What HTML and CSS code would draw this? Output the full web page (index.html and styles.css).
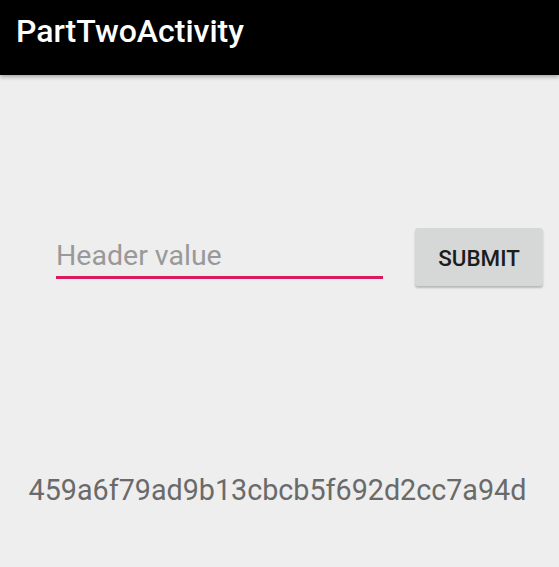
FILE: index.html
```html
<!DOCTYPE html>
<html>
<head>
<meta charset="utf-8">
<link rel="stylesheet" href="styles.css">
</head>
<body>
<header class="toolbar"><span class="title">PartTwoActivity</span></header>
<main class="content">
  <div class="form-row">
    <div class="field"><span class="hint">Header value</span></div>
    <button class="submit">SUBMIT</button>
  </div>
  <div class="result">459a6f79ad9b13cbcb5f692d2cc7a94d</div>
</main>
</body>
</html>
```
FILE: styles.css
```css
html, body {
  margin: 0;
  padding: 0;
  background: #eeeeee;
  font-family: Roboto, "Noto Sans", sans-serif;
}
.toolbar {
  position: relative;
  height: 75px;
  box-sizing: border-box;
  background: #000;
  display: flex;
  align-items: flex-start;
  padding: 13px 0 0 16px;
  box-shadow: 0 2px 4px rgba(0,0,0,0.3);
}
.title {
  color: #fff;
  font-size: 32px;
  line-height: 1.172;
  font-weight: 500;
}
.content {
  display: flex;
  flex-direction: column;
}
.form-row {
  display: flex;
  align-items: flex-start;
  margin-top: 153px;
  padding-left: 56px;
}
.field {
  width: 327px;
  margin-top: 11px;
  border-bottom: 3px solid #d81b60;
  padding-bottom: 4px;
}
.hint {
  display: block;
  color: #999999;
  font-size: 28.5px;
  line-height: 1.172;
}
.submit {
  margin-left: 32px;
  width: 128px;
  height: 58px;
  background: #d6d7d7;
  border: none;
  border-radius: 3px;
  box-shadow: 0 2px 2px rgba(0,0,0,0.22);
  font-family: Roboto, sans-serif;
  font-weight: 500;
  font-size: 22.4px;
  color: #1c1c1c;
  padding: 2px 0 0;
}
.result {
  margin-top: 188px;
  padding-right: 4px;
  text-align: center;
  font-size: 28.7px;
  line-height: 1.172;
  color: #6a6a6a;
}
```
